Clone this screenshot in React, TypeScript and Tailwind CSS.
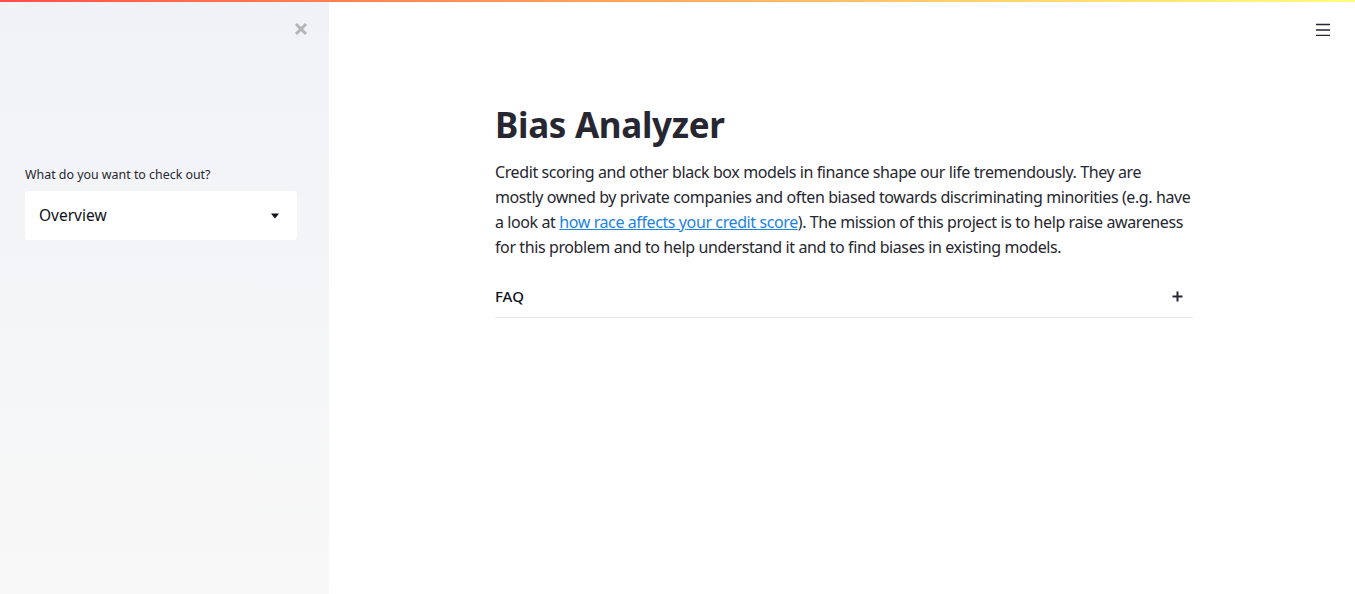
function TopDecoration() {
  return <div className="h-[2px] w-full bg-gradient-to-r from-[#ff4b4b] to-[#fffd80]" />
}

function Sidebar() {
  return (
    <aside className="relative flex w-[329px] shrink-0 flex-col bg-gradient-to-b from-[#f0f2f6] to-[#f8f8f8] pl-[25px] pr-[32px]">
      {/* close button */}
      <button className="absolute right-[21px] top-[20px] text-[#b4b4b4]">
        <svg width="14" height="14" viewBox="0 0 14 14">
          <path d="M2 2 L12 12 M12 2 L2 12" stroke="currentColor" strokeWidth="3" strokeLinecap="butt" />
        </svg>
      </button>
      <div className="pt-[164px]">
        <label className="block text-[12.4px] leading-[18px] text-[#262730]">What do you want to check out?</label>
        <div className="mt-[7px] flex h-[49px] items-center justify-between rounded-[4px] bg-white pl-[14px] pr-[17px]">
          <span className="text-[15.5px] text-[#0e1117]">Overview</span>
          <svg width="10" height="6" viewBox="0 0 10 6">
            <path d="M1 0.5 L9 0.5 L5 5.5 Z" fill="#0e1117" />
          </svg>
        </div>
      </div>
    </aside>
  )
}

function Faq() {
  return (
    <div className="mt-[16px] flex h-[42px] items-center justify-between border-b border-[#e6e6ea] pr-[10px]">
      <span className="text-[15px] font-medium text-[#0e1117]">FAQ</span>
      <svg width="11" height="11" viewBox="0 0 11 11">
        <path d="M5.5 0.5 V10.5 M0.5 5.5 H10.5" stroke="#262730" strokeWidth="2" />
      </svg>
    </div>
  )
}

export default function App() {
  return (
    <div
      className="flex h-[594px] flex-col overflow-hidden bg-white text-[#262730]"
      style={{ fontFamily: '"Noto Sans", "Open Sans", sans-serif' }}
    >
      <TopDecoration />
      <div className="flex flex-1">
        <Sidebar />
        <main className="relative flex-1">
          <button className="absolute right-[25px] top-[20px] text-[#262730]">
            <svg width="14" height="14" viewBox="0 0 14 14">
              <path d="M0 2.5 H14 M0 8 H14 M0 13.5 H14" stroke="currentColor" strokeWidth="1.6" />
            </svg>
          </button>
          <div className="mx-auto w-[698px] translate-x-[2px] pt-[96px]">
            <h1 className="text-[35px] font-bold leading-[54px] tracking-[-0.3px] text-[#262730]">Bias Analyzer</h1>
            <p className="mt-[8px] w-[720px] text-[16px] leading-[25px] tracking-[-0.4px]">
              Credit scoring and other black box models in finance shape our life tremendously. They are
              <br />
              mostly owned by private companies and often biased towards discriminating minorities (e.g. have
              <br />
              a look at{" "}
              <a href="#" className="text-[#1c83e1] underline">
                how race affects your credit score
              </a>
              ). The mission of this project is to help raise awareness
              <br />
              for this problem and to help understand it and to find biases in existing models.
            </p>
            <Faq />
          </div>
        </main>
      </div>
    </div>
  )
}
